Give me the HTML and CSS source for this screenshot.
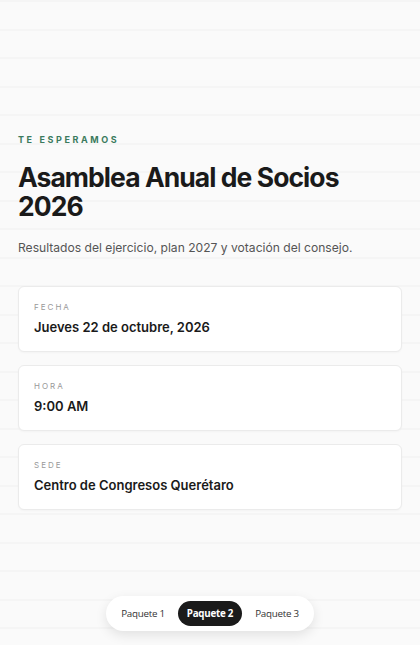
FILE: index.html
```html
<!DOCTYPE html>
<html lang="es">
<head>
<meta charset="utf-8">
<title>Asamblea Anual de Socios 2026</title>
<link rel="stylesheet" href="styles.css">
</head>
<body>
<main class="page">
  <header class="hero">
    <p class="eyebrow">TE ESPERAMOS</p>
    <h1 class="title">Asamblea Anual de Socios 2026</h1>
    <p class="lead">Resultados del ejercicio, plan 2027 y votación del consejo.</p>
  </header>
  <section class="cards">
    <div class="card">
      <div class="card-label">FECHA</div>
      <div class="card-value">Jueves 22 de octubre, 2026</div>
    </div>
    <div class="card">
      <div class="card-label">HORA</div>
      <div class="card-value">9:00 AM</div>
    </div>
    <div class="card">
      <div class="card-label">SEDE</div>
      <div class="card-value">Centro de Congresos Querétaro</div>
    </div>
  </section>
</main>
<nav class="switcher">
  <button class="pill">Paquete 1</button>
  <button class="pill active">Paquete 2</button>
  <button class="pill">Paquete 3</button>
</nav>
</body>
</html>
```
FILE: styles.css
```css
html, body {
  margin: 0;
  padding: 0;
}
body {
  width: 420px;
  height: 645px;
  overflow: hidden;
  background-color: #fafafa;
  background-image: repeating-linear-gradient(to bottom, #efefef 0, #efefef 1px, transparent 1px, transparent 28.5px);
  background-position: 0 0.5px;
  font-family: Inter, "Liberation Sans", sans-serif;
  color: #1a1a1a;
  position: relative;
}
.page {
  padding: 134px 18px 0 18px;
}
.hero {
  display: flex;
  flex-direction: column;
}
.eyebrow {
  margin: 0;
  font-size: 9px;
  font-weight: 700;
  letter-spacing: 2.6px;
  color: #3b7a5e;
  line-height: 12px;
}
.title {
  margin: 17px 0 0 0;
  font-size: 26.5px;
  line-height: 29px;
  font-weight: 700;
  letter-spacing: -0.95px;
  color: #1a1a1a;
}
.lead {
  margin: 18px 0 0 0;
  font-size: 12.1px;
  line-height: 18px;
  color: #555;
}
.cards {
  margin-top: 29px;
  display: flex;
  flex-direction: column;
  gap: 13px;
}
.card {
  background: #fff;
  border: 1px solid #ebebeb;
  border-radius: 6px;
  padding: 15px 15px 15px 15px;
  box-shadow: 0 1px 2px rgba(0,0,0,0.03);
  display: flex;
  flex-direction: column;
  gap: 5px;
}
.card-label {
  font-size: 8px;
  letter-spacing: 2px;
  color: #999;
  line-height: 11px;
}
.card-value {
  font-size: 13px;
  font-weight: 600;
  line-height: 18px;
  color: #1a1a1a;
}
.switcher {
  position: absolute;
  left: 106px;
  top: 596px;
  width: 208px;
  height: 35px;
  box-sizing: border-box;
  background: #fff;
  border-radius: 18px;
  box-shadow: 0 4px 12px rgba(0,0,0,0.10);
  display: flex;
  align-items: center;
  justify-content: space-between;
  padding: 0 5px;
}
.pill {
  border: none;
  background: transparent;
  font-family: "Open Sans", "Noto Sans", sans-serif;
  font-size: 9.8px;
  letter-spacing: -0.25px;
  color: #333;
  height: 25px;
  width: 64px;
  border-radius: 13px;
  padding: 0;
  cursor: pointer;
}
.pill.active {
  background: #1a1a1a;
  color: #fff;
  font-weight: 700;
}
```
